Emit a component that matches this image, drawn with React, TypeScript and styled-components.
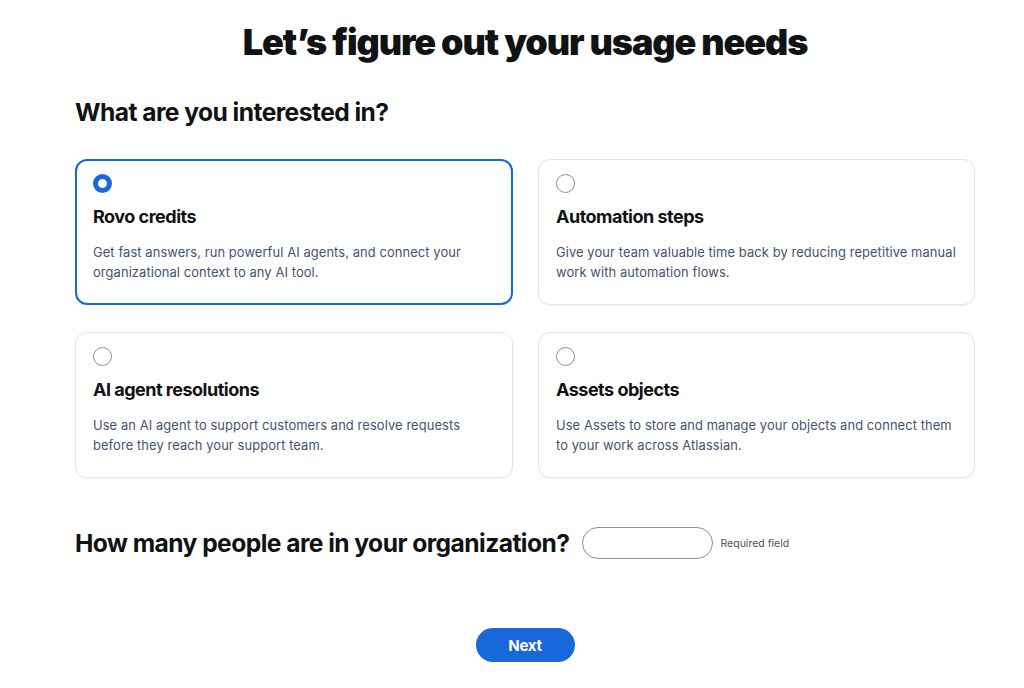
import React, { useState } from 'react';
import styled, { createGlobalStyle } from 'styled-components';

const GlobalStyle = createGlobalStyle`
  html, body {
    margin: 0;
    padding: 0;
    background: #ffffff;
  }
  body {
    font-family: Inter, "Noto Sans", sans-serif;
    color: #172b4d;
  }
`;

const Page = styled.main`
  width: 900px;
  margin-left: 75px;
  padding-top: 19px;
  display: flex;
  flex-direction: column;
`;

const Title = styled.h1`
  margin: 0;
  text-align: center;
  font-size: 36px;
  line-height: 46px;
  font-weight: 900;
  letter-spacing: -1.1px;
  color: #101214;
`;

const SectionTitle = styled.h2`
  margin: 0;
  font-size: 24.6px;
  line-height: 30px;
  font-weight: 700;
  letter-spacing: -0.55px;
  color: #101214;
`;

const InterestTitle = styled(SectionTitle)`
  margin-top: 32px;
`;

const CardGrid = styled.div`
  margin-top: 32px;
  display: grid;
  grid-template-columns: 438px 437px;
  column-gap: 25px;
  row-gap: 27px;
`;

const Card = styled.button<{ $selected: boolean }>`
  all: unset;
  box-sizing: border-box;
  height: 146px;
  padding: 14px 17px 0 ${({ $selected }) => ($selected ? '16px' : '17px')};
  border-radius: 12px;
  border: ${({ $selected }) => ($selected ? '2px solid #1868db' : '1px solid #e4e6ea')};
  box-shadow: ${({ $selected }) => ($selected ? 'none' : '0 1px 2px rgba(9, 30, 66, 0.06)')};
  cursor: pointer;
  display: flex;
  flex-direction: column;
  background: #ffffff;
`;

const Radio = styled.span<{ $checked: boolean }>`
  box-sizing: border-box;
  width: 19px;
  height: 19px;
  border-radius: 50%;
  border: ${({ $checked }) => ($checked ? '5.5px solid #1868db' : '1px solid #8c8f97')};
  background: #ffffff;
  margin-top: ${({ $checked }) => ($checked ? '-1px' : '0')};
`;

const CardTitle = styled.span`
  margin-top: 13px;
  font-size: 18px;
  line-height: 22px;
  font-weight: 700;
  letter-spacing: -0.5px;
  color: #101214;
`;

const CardText = styled.span`
  margin-top: 15px;
  font-size: 12.9px;
  line-height: 19.5px;
  font-weight: 400;
  color: #44546f;
  letter-spacing: 0.1px;
`;

const PeopleRow = styled.div`
  margin-top: 49px;
  display: flex;
  align-items: center;
`;

const PeopleInput = styled.input`
  box-sizing: border-box;
  width: 131px;
  height: 32px;
  margin-left: 13px;
  border: 1px solid #8c8f97;
  border-radius: 16px;
  padding: 0 12px;
  font-family: Inter, sans-serif;
  font-size: 14px;
  outline: none;
`;

const Hint = styled.span`
  margin-left: 7px;
  font-size: 10.5px;
  color: #505258;
`;

const Actions = styled.div`
  margin-top: 69px;
  display: flex;
  justify-content: center;
`;

const NextButton = styled.button`
  width: 99px;
  height: 34px;
  border: none;
  border-radius: 17px;
  background: #1868db;
  color: #ffffff;
  font-family: Inter, sans-serif;
  font-size: 15px;
  font-weight: 700;
  letter-spacing: -0.3px;
  cursor: pointer;
`;

const options = [
  {
    id: 'rovo',
    title: 'Rovo credits',
    text: 'Get fast answers, run powerful AI agents, and connect your organizational context to any AI tool.',
  },
  {
    id: 'automation',
    title: 'Automation steps',
    text: 'Give your team valuable time back by reducing repetitive manual work with automation flows.',
  },
  {
    id: 'agent',
    title: 'AI agent resolutions',
    text: 'Use an AI agent to support customers and resolve requests before they reach your support team.',
  },
  {
    id: 'assets',
    title: 'Assets objects',
    text: 'Use Assets to store and manage your objects and connect them to your work across Atlassian.',
  },
];

const App = () => {
  const [selected, setSelected] = useState('rovo');

  return (
    <>
      <GlobalStyle />
      <Page>
        <Title>Let’s figure out your usage needs</Title>
        <InterestTitle>What are you interested in?</InterestTitle>
        <CardGrid>
          {options.map((o) => (
            <Card key={o.id} $selected={selected === o.id} onClick={() => setSelected(o.id)}>
              <Radio $checked={selected === o.id} />
              <CardTitle>{o.title}</CardTitle>
              <CardText>{o.text}</CardText>
            </Card>
          ))}
        </CardGrid>
        <PeopleRow>
          <SectionTitle>How many people are in your organization?</SectionTitle>
          <PeopleInput type="text" aria-label="Number of people" />
          <Hint>Required field</Hint>
        </PeopleRow>
        <Actions>
          <NextButton>Next</NextButton>
        </Actions>
      </Page>
    </>
  );
};

export default App;
